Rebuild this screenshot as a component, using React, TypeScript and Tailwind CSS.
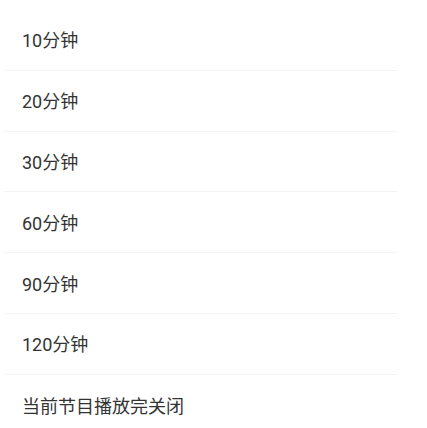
import React from "react";

const items = ["10分钟", "20分钟", "30分钟", "60分钟", "90分钟", "120分钟", "当前节目播放完关闭"];

export default function App() {
  return (
    <div className="w-[427px] h-[428px] bg-white overflow-hidden pt-[10px]" style={{ fontFamily: 'Roboto, "Noto Sans CJK SC", sans-serif' }}>
      <div className="ml-1 w-[393px] flex flex-col">
        {items.map((t, i) => (
          <div
            key={t}
            className={`h-[60.8px] flex items-center pl-[18px] pt-[2px] text-[18px] text-[#333333] ${i < items.length - 1 ? "border-b border-[#f3f3f3]" : ""}`}
          >
            {t}
          </div>
        ))}
      </div>
    </div>
  );
}
